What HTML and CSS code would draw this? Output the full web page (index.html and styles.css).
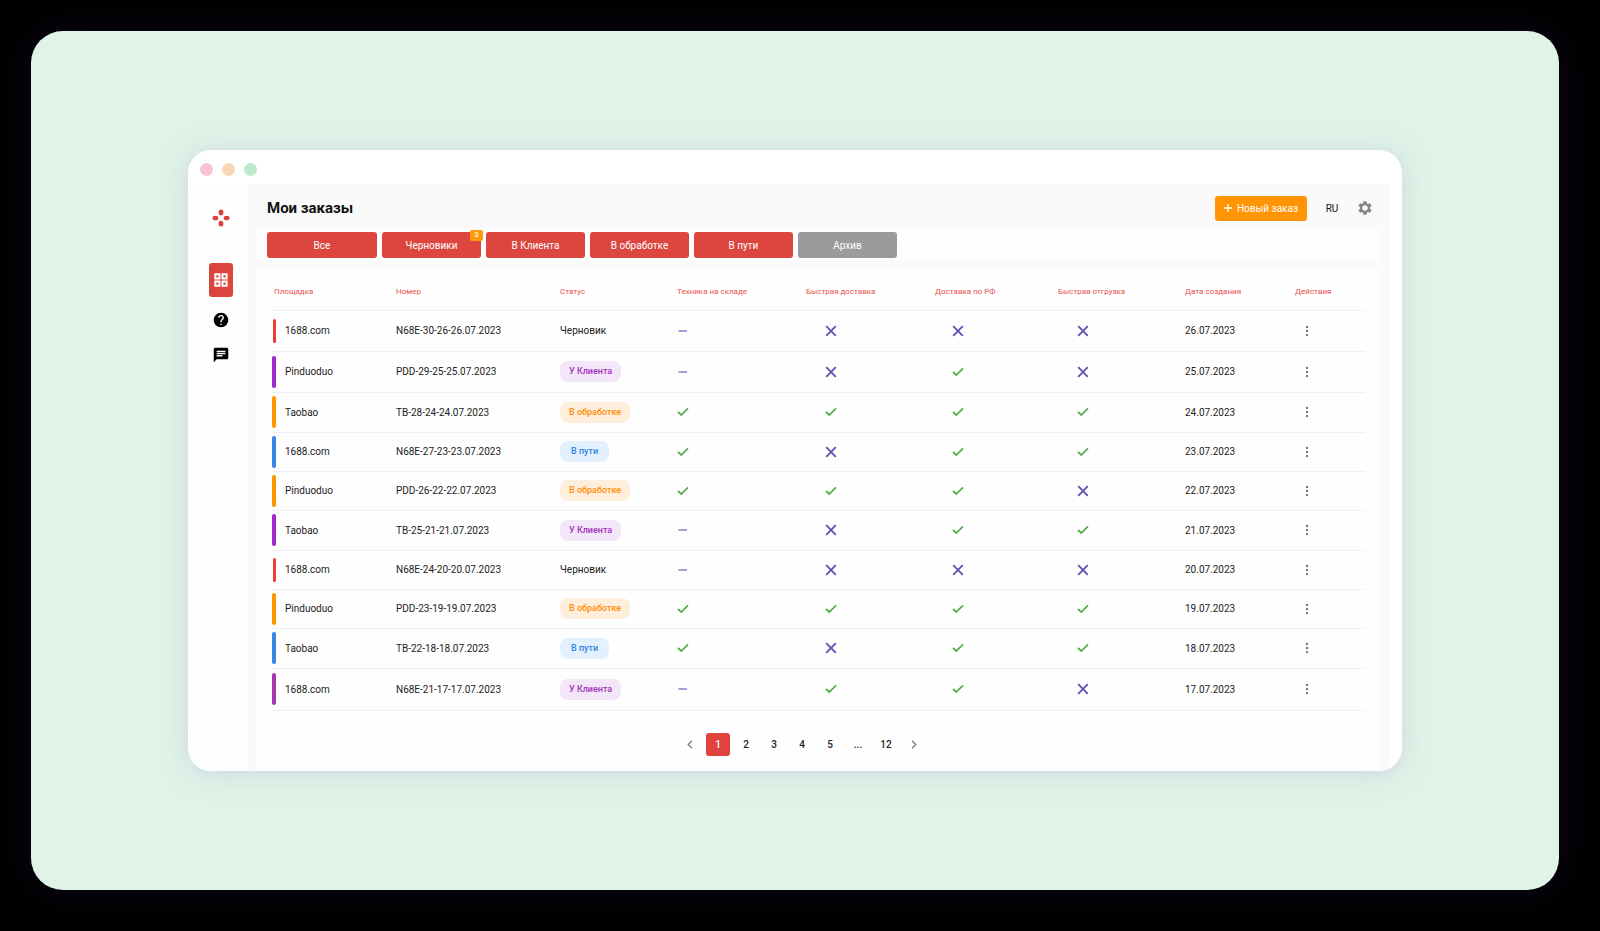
FILE: index.html
```html
<!DOCTYPE html>
<html lang="ru">
<head>
  <meta charset="UTF-8" />
  <meta name="viewport" content="width=device-width, initial-scale=1.0"/>
  <title>Мои заказы</title>
  <link rel="stylesheet" href="styles.css">
</head>
<body>
  <!-- общие иконки -->
  <svg class="sprite" aria-hidden="true">
    <symbol id="check" viewBox="0 0 12 12"><path d="M1 6 4.3 9 11 2.4" fill="none" stroke="#55ab4a" stroke-width="1.7"/></symbol>
    <symbol id="cross" viewBox="0 0 12 12"><path d="M1.2 1.2 10.8 10.8M10.8 1.2 1.2 10.8" fill="none" stroke="#6353b5" stroke-width="1.9"/></symbol>
    <symbol id="dash" viewBox="0 0 12 12"><path d="M1.5 6H10" fill="none" stroke="#8077c4" stroke-width="1.4"/></symbol>
    <symbol id="dots" viewBox="0 0 4 12"><circle cx="2" cy="1.9" r="1.2"/><circle cx="2" cy="6" r="1.2"/><circle cx="2" cy="10.1" r="1.2"/></symbol>
  </svg>

  <div class="stage">
    <div class="window">
      <div class="titlebar">
        <span class="dot pink"></span>
        <span class="dot peach"></span>
        <span class="dot mint"></span>
      </div>

      <div class="layout">
        <nav class="sidebar">
          <a href="#" class="logo" aria-label="Главная">
            <svg width="18" height="18" viewBox="0 0 18 18" fill="#dd403b"><ellipse cx="9" cy="3.4" rx="2.4" ry="2.9"/><ellipse cx="9" cy="14.6" rx="2.4" ry="2.9"/><ellipse cx="3.4" cy="9" rx="2.9" ry="2.3"/><ellipse cx="14.6" cy="9" rx="2.9" ry="2.3"/></svg>
          </a>
          <a href="#" class="active" aria-label="Заказы">
            <svg width="14" height="14" viewBox="0 0 14 14" fill="none" stroke="#fff" stroke-width="2"><path d="M1.3 1.3h4.2v4.2H1.3zM8.5 1.3h4.2v4.2H8.5zM1.3 8.5h4.2v4.2H1.3zM8.5 8.5h4.2v4.2H8.5z"/></svg>
          </a>
          <a href="#" aria-label="Помощь">
            <svg width="16" height="16" viewBox="1 1 22 22"><path d="M12 2C6.48 2 2 6.48 2 12s4.48 10 10 10 10-4.48 10-10S17.52 2 12 2zm1 17h-2v-2h2v2zm2.07-7.75l-.9.92C13.45 12.9 13 13.5 13 15h-2v-.5c0-1.1.45-2.1 1.17-2.83l1.24-1.26c.37-.36.59-.86.59-1.41 0-1.1-.9-2-2-2s-2 .9-2 2H8c0-2.21 1.79-4 4-4s4 1.79 4 4c0 .88-.36 1.68-.93 2.25z"/></svg>
          </a>
          <a href="#" aria-label="Сообщения">
            <svg width="16" height="16" viewBox="1 1 22 22"><path d="M20 2H4c-1.1 0-1.99.9-1.99 2L2 22l4-4h14c1.1 0 2-.9 2-2V4c0-1.1-.9-2-2-2zM6 9h12v2H6V9zm8 5H6v-2h8v2zm4-6H6V6h12v2z"/></svg>
          </a>
        </nav>

        <main class="main">
          <header class="header">
            <h1>Мои заказы</h1>
            <button type="button" class="new-order">
              <svg width="8" height="8" viewBox="0 0 8 8" stroke="#fff" stroke-width="1.3"><path d="M4 0v8M0 4h8"/></svg>
              Новый заказ
            </button>
            <button type="button" class="lang">RU</button>
            <button type="button" class="settings" aria-label="Настройки">
              <svg width="16" height="16" viewBox="0 0 24 24" fill="#858585"><path d="M19.43 12.98c.04-.32.07-.64.07-.98s-.03-.66-.07-.98l2.11-1.65c.19-.15.24-.42.12-.64l-2-3.46c-.12-.22-.39-.3-.61-.22l-2.49 1c-.52-.4-1.08-.73-1.69-.98l-.38-2.65C14.46 2.18 14.25 2 14 2h-4c-.25 0-.46.18-.49.42l-.38 2.65c-.61.25-1.17.59-1.69.98l-2.49-1c-.23-.09-.49 0-.61.22l-2 3.46c-.13.22-.07.49.12.64l2.11 1.65c-.04.32-.07.65-.07.98s.03.66.07.98l-2.11 1.65c-.19.15-.24.42-.12.64l2 3.46c.12.22.39.3.61.22l2.49-1c.52.4 1.08.73 1.69.98l.38 2.65c.03.24.24.42.49.42h4c.25 0 .46-.18.49-.42l.38-2.65c.61-.25 1.17-.59 1.69-.98l2.49 1c.23.09.49 0 .61-.22l2-3.46c.12-.22.07-.49-.12-.64l-2.11-1.65zM12 16.2c-2.32 0-4.2-1.88-4.2-4.2s1.88-4.2 4.2-4.2 4.2 1.88 4.2 4.2-1.88 4.2-4.2 4.2z"/></svg>
            </button>
          </header>

          <div class="filters">
            <button type="button" class="all">Все</button>
            <button type="button">Черновики <span class="badge">3</span></button>
            <button type="button">В Клиента</button>
            <button type="button">В обработке</button>
            <button type="button">В пути</button>
            <button type="button" class="archive">Архив</button>
          </div>

          <section class="card">
            <table>
              <colgroup>
                <col class="c-site"><col class="c-number"><col class="c-status"><col class="c-stock"><col class="c-fast"><col class="c-rf"><col class="c-ship"><col class="c-date"><col class="c-actions">
              </colgroup>
              <thead>
                <tr>
                  <th class="first">Площадка</th>
                  <th>Номер</th>
                  <th>Статус</th>
                  <th>Техника на складе</th>
                  <th>Быстрая доставка</th>
                  <th>Доставка по РФ</th>
                  <th>Быстрая отгрузка</th>
                  <th>Дата создания</th>
                  <th>Действия</th>
                </tr>
              </thead>
              <tbody id="orders"></tbody>
            </table>

            <nav class="pages" aria-label="Страницы">
              <button type="button" aria-label="Назад"><svg width="6" height="9" viewBox="0 0 6 9"><path d="M5 .8 1.2 4.5 5 8.2"/></svg></button>
              <button type="button" class="current">1</button>
              <button type="button">2</button>
              <button type="button">3</button>
              <button type="button">4</button>
              <button type="button">5</button>
              <span>...</span>
              <button type="button">12</button>
              <button type="button" aria-label="Вперёд"><svg width="6" height="9" viewBox="0 0 6 9"><path d="M1 .8 4.8 4.5 1 8.2"/></svg></button>
            </nav>
          </section>
        </main>
      </div>
    </div>
  </div>

  <script src="orders.js"></script>
</body>
</html>
```
FILE: styles.css
```css
* { box-sizing: border-box; }
body { margin: 0; padding: 31px 41px 41px 31px; background: #000; color: #222; font-family: Roboto, "Liberation Sans", sans-serif; font-size: 10px; }
button { padding: 0; border: none; background: none; color: inherit; font: inherit; cursor: pointer; }
svg { display: block; }
.sprite { display: none; }

.stage { padding: 119px 157px; background: #dff3e6; border-radius: 32px; box-shadow: 0 0 36px rgba(90, 50, 160, 0.16); }
.window { overflow: hidden; background: #fff; border-radius: 23px; box-shadow: 0 2px 24px rgba(190, 190, 235, 0.55); }
.titlebar { display: flex; align-items: center; gap: 9px; height: 34px; padding: 4px 12px 0; }
.dot { width: 13px; height: 13px; border-radius: 50%; }
.pink { background: #fcc3d2; }
.peach { background: #f9d7b4; }
.mint { background: #bce9cc; }

.layout { display: flex; padding-right: 13px; }
.sidebar { display: flex; flex-direction: column; align-items: center; gap: 19px; width: 59px; padding: 25px 0 0 7px; background: #fefefe; }
.sidebar .logo { margin-bottom: 17px; }
.sidebar .active { display: flex; align-items: center; justify-content: center; width: 24px; height: 34px; margin-bottom: -4px; background: #dd443e; border-radius: 3px; }

.main { flex: 1; padding: 0 9px 0 10px; background: #fafafa; }
.header { display: flex; align-items: center; height: 46px; padding: 2px 7px 0 10px; }
h1 { flex: 1; margin: 0; color: #111; font-size: 15px; font-weight: 700; }
.new-order { display: flex; align-items: center; justify-content: center; gap: 5px; width: 92px; height: 25px; background: #ff9505; border-radius: 3px; color: #fff; }
.lang { width: 50px; color: #111; }

.filters { display: flex; gap: 5px; padding: 2px 10px; background: #fefefe; }
.filters button { position: relative; width: 99px; height: 26px; background: #dc463f; border-radius: 3px; color: #fff; }
.filters .all { width: 110px; }
.filters .archive { background: #9b9b9b; }
.badge { position: absolute; top: -2px; right: -2px; width: 13px; height: 11px; background: #ff9a0c; border-radius: 2px; font-size: 7px; font-weight: 500; line-height: 11px; }

.card { margin-top: 10px; padding: 0 15px; background: #fefefe; }
table { width: 100%; table-layout: fixed; border-collapse: collapse; }
.c-site { width: 124px; }
.c-number { width: 164px; }
.c-status { width: 117px; }
.c-stock { width: 129px; }
.c-fast { width: 129px; }
.c-rf { width: 123px; }
.c-ship { width: 127px; }
.c-date { width: 110px; }
.c-actions { width: 70px; }
th, td { padding: 0; border-bottom: 1px solid #f1f1f1; text-align: left; white-space: nowrap; }
th { height: 40px; padding-top: 4px; color: #e8514c; font-size: 8px; font-weight: 400; }
th.first { padding-left: 2px; }
td { height: 39px; }
tr:nth-child(3n) td { height: 40px; }
tr:nth-child(-n+2) td { height: 41px; }
tr:last-child td { height: 42px; }
td svg { width: 12px; height: 12px; }
td.inset { padding-left: 19px; }
td.inset.rf { padding-left: 17px; }

.site { display: grid; grid-template-columns: 4px auto; align-items: center; gap: 9px; }
.bar { justify-self: end; width: 4px; height: 32px; border-radius: 2px; }
.bar.draft { width: 3px; height: 24px; background: #ee3b34; }
.bar.client { background: #a127cf; }
.bar.process { background: #ff9500; }
.bar.transit { background: #3587e3; }
tr:last-child .bar { background: #a637ac; }
.status { display: inline-block; line-height: 21px; }
.status.client, .status.process, .status.transit { padding: 0 9px; border-radius: 8px; font-size: 9px; font-weight: 500; }
.status.client { background: #f2e6f8; color: #a034bd; }
.status.process { background: #ffeedb; color: #ff8c05; }
.status.transit { padding: 0 11px; background: #e3f0fd; color: #2f86e0; }
.more { display: block; width: 24px; height: 20px; }
.more svg { width: 4px; margin: auto; fill: #777; }

.pages { display: flex; align-items: center; justify-content: center; gap: 4px; padding: 22px 33px 15px 0; }
.pages button, .pages span { width: 24px; height: 23px; border-radius: 3px; font-weight: 500; line-height: 23px; text-align: center; }
.pages .current { background: #e0433d; color: #fff; }
.pages svg { margin: auto; fill: none; stroke: #777; stroke-width: 1.2; }
```
FILE: orders.js
```js
// [площадка, номер, статус, склад, быстрая доставка, по РФ, отгрузка, дата]
const orders = [
  ['1688.com', 'N68E-30-26-26.07.2023', 'draft', 'dash', 'cross', 'cross', 'cross', '26.07.2023'],
  ['Pinduoduo', 'PDD-29-25-25.07.2023', 'client', 'dash', 'cross', 'check', 'cross', '25.07.2023'],
  ['Taobao', 'TB-28-24-24.07.2023', 'process', 'check', 'check', 'check', 'check', '24.07.2023'],
  ['1688.com', 'N68E-27-23-23.07.2023', 'transit', 'check', 'cross', 'check', 'check', '23.07.2023'],
  ['Pinduoduo', 'PDD-26-22-22.07.2023', 'process', 'check', 'check', 'check', 'cross', '22.07.2023'],
  ['Taobao', 'TB-25-21-21.07.2023', 'client', 'dash', 'cross', 'check', 'check', '21.07.2023'],
  ['1688.com', 'N68E-24-20-20.07.2023', 'draft', 'dash', 'cross', 'cross', 'cross', '20.07.2023'],
  ['Pinduoduo', 'PDD-23-19-19.07.2023', 'process', 'check', 'check', 'check', 'check', '19.07.2023'],
  ['Taobao', 'TB-22-18-18.07.2023', 'transit', 'check', 'cross', 'check', 'check', '18.07.2023'],
  ['1688.com', 'N68E-21-17-17.07.2023', 'client', 'dash', 'check', 'check', 'cross', '17.07.2023']
];

const statuses = { draft: 'Черновик', client: 'У Клиента', process: 'В обработке', transit: 'В пути' };
const icon = name => `<svg><use href="#${name}"/></svg>`;

document.getElementById('orders').innerHTML = orders.map(([site, number, status, stock, fast, rf, ship, date]) => `
  <tr>
    <td><div class="site"><span class="bar ${status}"></span>${site}</div></td>
    <td>${number}</td>
    <td><span class="status ${status}">${statuses[status]}</span></td>
    <td>${icon(stock)}</td>
    <td class="inset">${icon(fast)}</td>
    <td class="inset rf">${icon(rf)}</td>
    <td class="inset">${icon(ship)}</td>
    <td>${date}</td>
    <td><button type="button" class="more" aria-label="Действия">${icon('dots')}</button></td>
  </tr>
`).join('');
```
